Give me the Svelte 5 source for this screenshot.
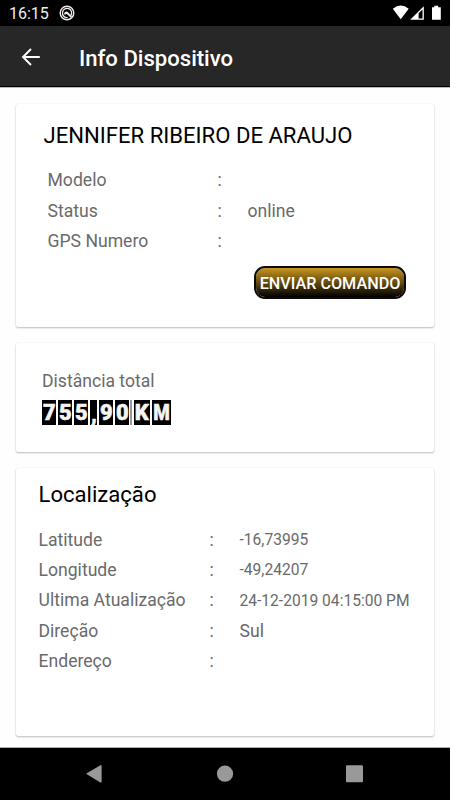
<script lang="ts">
  type Row = { label: string; value: string; small?: boolean };

  const device: Row[] = [
    { label: 'Modelo', value: '' },
    { label: 'Status', value: 'online' },
    { label: 'GPS Numero', value: '' },
  ];

  const location: Row[] = [
    { label: 'Latitude', value: '-16,73995', small: true },
    { label: 'Longitude', value: '-49,24207', small: true },
    { label: 'Ultima Atualização', value: '24-12-2019 04:15:00 PM', small: true },
    { label: 'Direção', value: 'Sul' },
    { label: 'Endereço', value: '' },
  ];

  const odometer = [
    { char: '7', width: 14 },
    { char: '5', width: 14 },
    { char: '5', width: 14 },
    { char: ',', width: 7 },
    { char: '9', width: 14 },
    { char: '0', width: 13.5 },
    { char: '', width: 2 },
    { char: 'K', width: 16.5 },
    { char: 'M', width: 18.5 },
  ];
</script>

<div class="screen">
  <div class="status-bar">
    <span class="clock">16:15</span>
    <svg class="notification" width="16" height="16" viewBox="0 0 16 16">
      <circle cx="8" cy="8" r="6.8" fill="none" stroke="#eee" stroke-width="1.4" />
      <path d="M11.8 10.6A4.6 4.6 0 1 0 8.6 12.5" fill="none" stroke="#eee" stroke-width="1.3" />
      <path d="M5 8 7 6.4 8.6 6.8 13 11.6 11.8 12.8 7.9 9 6.6 9.2 5.8 10Z" fill="#eee" />
    </svg>
    <svg class="signals" width="50" height="16" viewBox="0 0 50 16">
      <path d="M0.8 3.8Q8.7-2.7 16.7 3.8L8.7 14.3Z" fill="#fff" />
      <path d="M18.2 14.8 31.8 1.2V14.8Z" fill="#fff" />
      <path d="M26.6 8.3 30.5 4.6V13.4H26.6Z" fill="#000" />
      <path d="M40 2.2H42.3V.8H46.2V2.2H48.8V14.8H40Z" fill="#fff" />
    </svg>
  </div>

  <header>
    <svg width="20" height="18" viewBox="0 0 20 18">
      <path d="M18.8 9H2M10 1 2 9l8 8" fill="none" stroke="#fff" stroke-width="1.9" />
    </svg>
    <h1>Info Dispositivo</h1>
  </header>

  <main>
    <section class="card device">
      <h2>JENNIFER RIBEIRO DE ARAUJO</h2>
      <div class="rows">
        {#each device as row}
          <span>{row.label}</span>
          <span>:</span>
          <span>{row.value}</span>
        {/each}
      </div>
      <button>ENVIAR COMANDO</button>
    </section>

    <section class="card distance">
      <p>Distância total</p>
      <div class="odometer">
        {#each odometer as cell}
          <span class="cell" class:gap={!cell.char} class:comma={cell.char === ','} class:wide={cell.char === 'M'} style="width: {cell.width}px">
            <span class="glyph">{cell.char}</span>
          </span>
        {/each}
      </div>
    </section>

    <section class="card location">
      <h2>Localização</h2>
      <div class="rows">
        {#each location as row}
          <span>{row.label}</span>
          <span>:</span>
          <span class:small={row.small}>{row.value}</span>
        {/each}
      </div>
    </section>
  </main>

  <nav>
    <svg width="450" height="52" viewBox="0 0 450 52">
      <path d="M86 25.8 100.4 17.2Q101.6 16.7 101.6 17.8V33.8Q101.6 34.9 100.4 34.4Z" fill="#999" />
      <circle cx="225" cy="25.7" r="8.1" fill="#999" />
      <rect x="346" y="17.2" width="17" height="17" rx="1" fill="#999" />
    </svg>
  </nav>
</div>

<style>
  :global(body) {
    margin: 0;
    background: #fff;
  }
  .screen {
    width: 450px;
    height: 800px;
    display: flex;
    flex-direction: column;
    overflow: hidden;
    background: #fefefe;
    font-family: Roboto, 'Liberation Sans', sans-serif;
  }
  .status-bar {
    height: 26px;
    box-sizing: border-box;
    padding: 0 8px 0 9px;
    display: flex;
    align-items: center;
    background: #000;
    color: #eee;
  }
  .clock {
    font-size: 16px;
    line-height: 26px;
    width: 50px;
    padding-top: 2px;
  }
  .signals {
    margin-left: auto;
    margin-top: -1px;
  }
  header {
    height: 61px;
    box-sizing: border-box;
    padding-left: 21px;
    display: flex;
    align-items: center;
    gap: 38px;
    background: #272727;
    color: #fff;
    border-bottom: 1px solid #000;
    box-shadow: 0 1px 0 #bbb;
  }
  header svg {
    margin-top: 1px;
  }
  h1 {
    margin: 0;
    padding-top: 3px;
    font-size: 22.1px;
    font-weight: 500;
  }
  main {
    flex: 1;
    padding: 16px 16px 0;
    display: flex;
    flex-direction: column;
    gap: 16px;
  }
  .card {
    box-sizing: border-box;
    background: #fff;
    border-radius: 2px;
    box-shadow: 0 1px 2px rgba(0, 0, 0, 0.25), 0 0 1px rgba(0, 0, 0, 0.12);
    display: flex;
    flex-direction: column;
  }
  .device {
    height: 223px;
    margin-top: 1px;
    padding: 16px 28px 0 27.5px;
  }
  .distance {
    height: 109px;
    padding: 27px 26px 0;
  }
  .location {
    height: 268px;
    padding: 11px 22px 0 22.5px;
  }
  h2 {
    margin: 0;
    font-size: 22.1px;
    line-height: 30px;
    font-weight: 400;
    color: #000;
    white-space: nowrap;
  }
  .rows {
    display: grid;
    grid-auto-rows: 30.4px;
    align-items: center;
    color: #6a6a6a;
    font-size: 17.6px;
    white-space: nowrap;
  }
  .device .rows {
    grid-template-columns: 170px 30px 1fr;
    padding: 15px 0 0 4px;
  }
  .location .rows {
    grid-template-columns: 171px 30px 1fr;
    padding-top: 15.4px;
  }
  .small {
    font-size: 15.6px;
    padding-top: 1px;
  }
  button {
    align-self: flex-end;
    width: 152px;
    height: 33px;
    margin-top: 10px;
    padding: 1px 0 0;
    border: 2px solid #0c0a08;
    border-radius: 11px;
    background: linear-gradient(#c8951f, #000) padding-box;
    color: #fff;
    font-family: inherit;
    font-size: 16.2px;
    font-weight: 500;
    white-space: nowrap;
  }
  p {
    margin: 0;
    line-height: 22px;
    font-size: 17.6px;
    color: #6a6a6a;
  }
  .odometer {
    display: flex;
    gap: 2px;
    margin-top: 8px;
  }
  .cell {
    height: 25px;
    background: #000;
    color: #f4f4f4;
    display: flex;
    justify-content: center;
    font-size: 21.5px;
    line-height: 26px;
    font-weight: 900;
    -webkit-text-stroke: 0.5px #f4f4f4;
    overflow: hidden;
  }
  .glyph {
    transform: scaleX(1.02);
  }
  .wide .glyph {
    transform: scaleX(0.88);
  }
  .gap {
    background: #999;
    margin: 0 -0.5px;
  }
  .comma {
    line-height: 29px;
  }
  nav {
    height: 53px;
    background: #000;
    border-top: 1px solid #aaa;
    box-sizing: border-box;
  }
  svg {
    display: block;
  }
</style>
